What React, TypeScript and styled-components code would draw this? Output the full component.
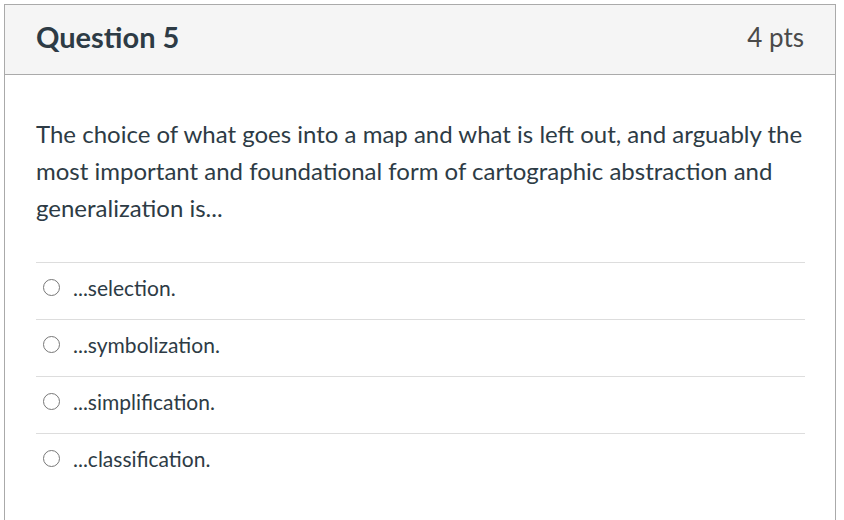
import React from 'react';
import styled, { createGlobalStyle } from 'styled-components';

const GlobalStyle = createGlobalStyle`
  body {
    margin: 0;
    background: #ffffff;
    font-family: Lato, "Noto Sans", sans-serif;
    color: #2d3b45;
  }
`;

const Card = styled.div`
  margin: 4px 0 0 4px;
  width: 830px;
  min-height: 540px;
  border: 1px solid #aaaaaa;
  box-sizing: content-box;
`;

const Header = styled.div`
  display: flex;
  align-items: center;
  justify-content: space-between;
  height: 63px;
  padding: 0 31px 6px 31px;
  background: #f5f5f5;
  border-bottom: 1px solid #aaaaaa;
`;

const Title = styled.h2`
  margin: 0;
  font-size: 29px;
  font-weight: 700;
  color: #2d3b45;
`;

const Points = styled.span`
  font-size: 26px;
  color: #4a4a4a;
`;

const Body = styled.div`
  padding: 40px 30px 0 31px;
`;

const QuestionText = styled.p`
  margin: 0 0 36px 0;
  font-size: 24px;
  line-height: 37px;
`;

const Answers = styled.div`
  display: flex;
  flex-direction: column;
`;

const Answer = styled.label`
  display: flex;
  align-items: center;
  gap: 13px;
  height: 49px;
  padding: 0 0 7px 7px;
  border-top: 1px solid #dddddd;
  font-size: 21px;
  color: #2d3b45;
`;

const Radio = styled.span`
  width: 15px;
  height: 15px;
  border: 1.5px solid #777777;
  border-radius: 50%;
  flex-shrink: 0;
`;

const answers = ['...selection.', '...symbolization.', '...simplification.', '...classification.'];

const App = () => {
  return (
    <>
      <GlobalStyle />
      <Card>
        <Header>
          <Title>Question 5</Title>
          <Points>4 pts</Points>
        </Header>
        <Body>
          <QuestionText>
            The choice of what goes into a map and what is left out, and arguably the most important and
            foundational form of cartographic abstraction and generalization is...
          </QuestionText>
          <Answers>
            {answers.map((a) => (
              <Answer key={a}>
                <Radio />
                {a}
              </Answer>
            ))}
          </Answers>
        </Body>
      </Card>
    </>
  );
};

export default App;
